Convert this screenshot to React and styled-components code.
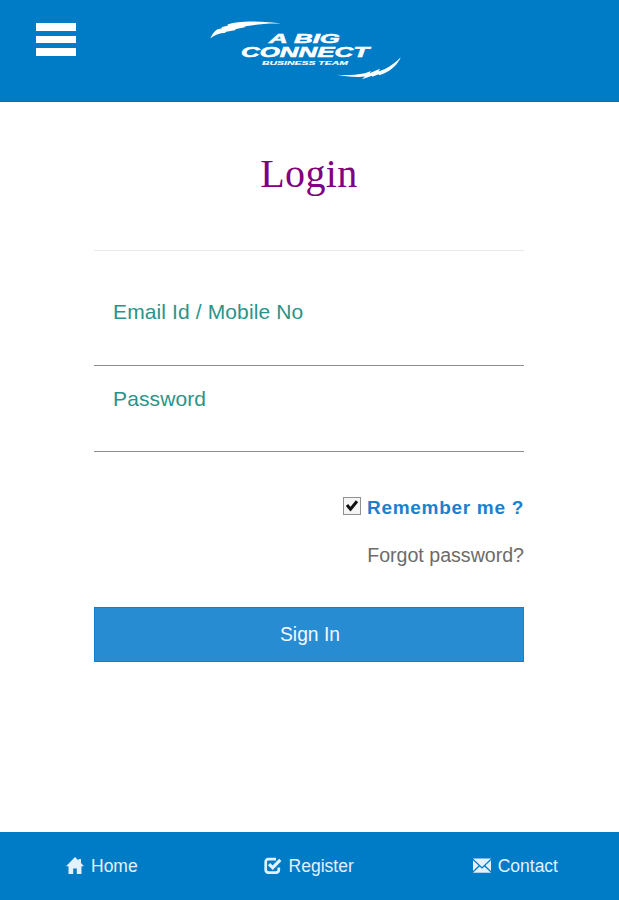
import styled, { createGlobalStyle } from 'styled-components';
import { useState } from 'react';

const GlobalStyle = createGlobalStyle`
    * {
        box-sizing: border-box;
    }
    body {
        margin: 0;
        background-color: #FFFFFF;
        font-family: "Liberation Sans", Arial, sans-serif;
    }
`

function Logo() {
    return (
        <LogoSvg viewBox="0 0 196 62" role="img" aria-label="A Big Connect Business Team">
            <path d="M2.3 20.5 C4 16.5 6 13.5 9 11.5 L14 10.2 L13.5 9.3 L20 7.5 L19.5 6.5 C26 4.2 34 3.5 42 3.5 C54 3.5 64 4.5 73 5.5 C62 5.2 52 5.8 45 7.2 L36 8.4 L38 9 L27 11.2 L28 12 L17 14 L18 14.8 C11 15.2 6 17 2.3 20.5Z" />
            <path d="M192.7 39.3 C190 46 184 52 176 55.5 L171 57.2 L171 56.2 L164 58.8 L164 57.8 L154 61.2 L157 58.6 L150 59 C142 58.8 135 58 128.5 56.8 C138 57.2 148 57 157 55.2 L163 53 L161.5 55.2 L172 50.8 L170.5 53.6 L177 51 C183 48 188 44 192.7 39.3Z" />
            <LogoText x="61" y="25.3" $size={13.5} textLength="71">A BIG</LogoText>
            <LogoText x="33" y="38.7" $size={14} textLength="128">CONNECT</LogoText>
            <LogoText x="54" y="47" $size={5.7} $stroke={0.1} textLength="86">BUSINESS TEAM</LogoText>
        </LogoSvg>
    )
}

function HomeIcon() {
    return (
        <Icon viewBox="0 0 18 18">
            <path d="M9 0 L12.5 3.5 V2 H15 V6 L18 9.3 H15.5 V17 H10.8 V11.5 H7.2 V17 H2.5 V9.3 H0Z" />
        </Icon>
    )
}

function RegisterIcon() {
    return (
        <Icon viewBox="0 0 18 18">
            <path d="M12 2.2 H4.5 Q1.7 2.2 1.7 5 V12.8 Q1.7 15.6 4.5 15.6 H12 Q14.8 15.6 14.8 12.8 V10.5" fill="none" stroke="currentColor" strokeWidth="2.7" />
            <path d="M5 7.2 L8.7 10.7 L16.3 2.9" fill="none" stroke="currentColor" strokeWidth="3.2" />
        </Icon>
    )
}

function ContactIcon() {
    return (
        <Icon viewBox="0 0 18 18">
            <path d="M0 1.5 H18 L9 10Z M0 3.2 L5.6 8.6 L0 14Z M18 3.2 V14 L12.4 8.6Z M6.6 9.5 L9 11.7 L11.4 9.5 L18 15.8 H0Z" />
        </Icon>
    )
}

function App() {
    const [remember, setRemember] = useState(true);

    return (
        <>
        <GlobalStyle />
        <Page>
            <Header>
                <MenuButton aria-label="Menu">
                    <span />
                    <span />
                    <span />
                </MenuButton>
                <Logo />
            </Header>
            <Form onSubmit={(e) => e.preventDefault()}>
                <Title>Login</Title>
                <Field>
                    <Input type="text" placeholder="Email Id / Mobile No" />
                </Field>
                <Field>
                    <Input type="password" placeholder="Password" />
                </Field>
                <Remember>
                    <HiddenCheck type="checkbox" checked={remember} onChange={() => setRemember(!remember)} />
                    <CheckBox viewBox="0 0 18 18">
                        <rect x="0.5" y="0.5" width="17" height="17" fill="#F5F5F5" stroke="#909090" />
                        {remember && <path d="M4 8 L7.5 12.2 L14 4.3" fill="none" stroke="#111111" strokeWidth="3" />}
                    </CheckBox>
                    <span>Remember me ?</span>
                </Remember>
                <Forgot href="#">Forgot password?</Forgot>
                <SignIn type="submit">Sign In</SignIn>
            </Form>
            <Footer>
                <FooterLink href="#"><HomeIcon />Home</FooterLink>
                <FooterLink href="#"><RegisterIcon />Register</FooterLink>
                <FooterLink href="#"><ContactIcon />Contact</FooterLink>
            </Footer>
        </Page>
        </>
    )
}

export default App;

const Page = styled.div`
    display: flex;
    flex-direction: column;
    height: 900px;
`

const Header = styled.header`
    display: flex;
    align-items: flex-start;
    height: 102px;
    padding: 18px 36px;
    background-color: #007BC6;
    border-bottom: 1px solid #0870B5;
`

const MenuButton = styled.button`
    display: flex;
    flex-direction: column;
    gap: 5px;
    width: 40px;
    padding: 5px 0 0;
    margin-right: 132px;
    border: none;
    background: none;
    span{
        height: 7.5px;
        background-color: #FFFFFF;
    }
`

const LogoSvg = styled.svg`
    width: 196px;
    height: 62px;
    fill: #FFFFFF;
`

const LogoText = styled.text.attrs({ lengthAdjust: 'spacingAndGlyphs' })`
    font-size: ${(props) => props.$size}px;
    font-family: "Liberation Sans", Arial, sans-serif;
    font-weight: 700;
    font-style: italic;
    stroke: #FFFFFF;
    stroke-width: ${(props) => props.$stroke || 0.5}px;
`

const Form = styled.form`
    display: flex;
    flex-direction: column;
    flex: 1;
    width: 430px;
    margin-left: 94px;
`

const Title = styled.h1`
    height: 149px;
    margin: 0;
    padding-top: 49px;
    border-bottom: 1px solid #E9E9E9;
    color: #800080;
    font-family: "Liberation Serif", "Times New Roman", serif;
    font-size: 40px;
    font-weight: 400;
    line-height: 46px;
    letter-spacing: 0.4px;
    text-align: center;
`

const Field = styled.div`
    height: 86px;
    padding: 19px 19px 0;
    border-bottom: 1px solid #8C8C8C;
    ${Title} + & {
        height: 115px;
        padding-top: 47px;
    }
`

const Input = styled.input`
    width: 100%;
    height: 28px;
    padding: 0;
    border: none;
    outline: none;
    background: none;
    color: #2B9389;
    font-family: inherit;
    font-size: 21px;
    letter-spacing: 0.12px;
    &::placeholder{
        color: #2B9389;
        opacity: 1;
    }
`

const Remember = styled.label`
    display: flex;
    align-items: center;
    justify-content: flex-end;
    height: 24px;
    margin-top: 43px;
    color: #1C80CD;
    font-size: 19px;
    font-weight: 700;
    letter-spacing: 0.7px;
    span{
        padding-top: 1px;
    }
`

const HiddenCheck = styled.input`
    position: absolute;
    opacity: 0;
`

const CheckBox = styled.svg`
    width: 18px;
    height: 18px;
    margin: -3px 6px 0 0;
`

const Forgot = styled.a`
    align-self: flex-end;
    height: 24px;
    margin-top: 24px;
    color: #6B6B6B;
    font-size: 19.6px;
    line-height: 24px;
    text-decoration: none;
`

const SignIn = styled.button`
    height: 55px;
    margin-top: 40px;
    padding-left: 8px;
    border: 1px solid #1280CB;
    background-color: #288CD2;
    color: #F2F9FF;
    font-family: inherit;
    font-size: 19.3px;
`

const Footer = styled.footer`
    display: flex;
    justify-content: space-between;
    height: 68px;
    padding: 0 61px 0 66px;
    background-color: #007BC6;
`

const FooterLink = styled.a`
    display: flex;
    align-items: center;
    gap: 7px;
    color: #E3F1FC;
    font-size: 17.5px;
    text-decoration: none;
    &:nth-child(2){
        margin-left: 7px;
    }
`

const Icon = styled.svg`
    width: 18px;
    height: 18px;
    margin-top: -1px;
    fill: currentColor;
`
